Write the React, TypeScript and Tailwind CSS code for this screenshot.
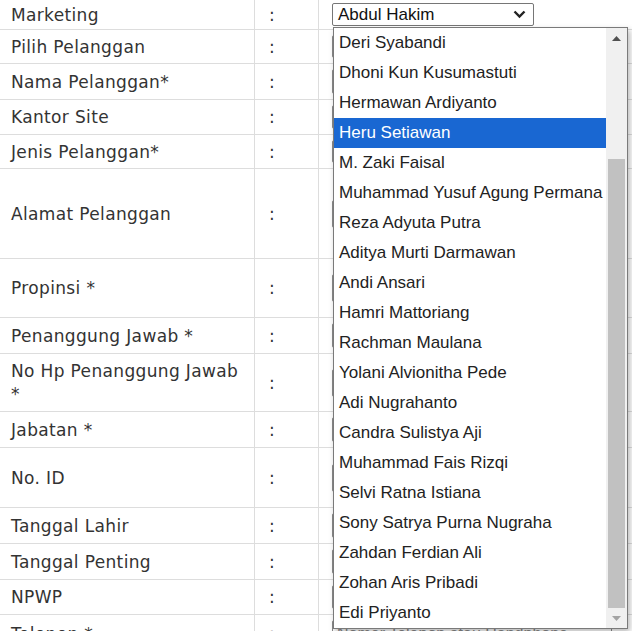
import React from "react";

const rows: { label: string; h: number }[] = [
  { label: "Marketing", h: 30 },
  { label: "Pilih Pelanggan", h: 34 },
  { label: "Nama Pelanggan*", h: 36 },
  { label: "Kantor Site", h: 35 },
  { label: "Jenis Pelanggan*", h: 34 },
  { label: "Alamat Pelanggan", h: 90 },
  { label: "Propinsi *", h: 59 },
  { label: "Penanggung Jawab *", h: 36 },
  { label: "No Hp Penanggung Jawab *", h: 58 },
  { label: "Jabatan *", h: 36 },
  { label: "No. ID", h: 60 },
  { label: "Tanggal Lahir", h: 36 },
  { label: "Tanggal Penting", h: 36 },
  { label: "NPWP", h: 35 },
  { label: "Telepon *", h: 38 },
];

const options = [
  "Deri Syabandi",
  "Dhoni Kun Kusumastuti",
  "Hermawan Ardiyanto",
  "Heru Setiawan",
  "M. Zaki Faisal",
  "Muhammad Yusuf Agung Permana",
  "Reza Adyuta Putra",
  "Aditya Murti Darmawan",
  "Andi Ansari",
  "Hamri Mattoriang",
  "Rachman Maulana",
  "Yolani Alvionitha Pede",
  "Adi Nugrahanto",
  "Candra Sulistya Aji",
  "Muhammad Fais Rizqi",
  "Selvi Ratna Istiana",
  "Sony Satrya Purna Nugraha",
  "Zahdan Ferdian Ali",
  "Zohan Aris Pribadi",
  "Edi Priyanto",
];

export default function App() {
  return (
    <div className="relative w-[632px] h-[631px] overflow-hidden bg-white">
      <div className="flex flex-col w-[760px]" style={{ fontFamily: '"DejaVu Sans", Verdana, sans-serif' }}>
        {rows.map((r, i) => (
          <div
            key={i}
            className="flex border-b border-[#dddddd] text-[#333333] text-[17px] leading-[23px] tracking-[0.35px]"
            style={{ height: r.h }}
          >
            <div className="w-[255px] shrink-0 border-r border-[#dddddd] pl-[11px] pr-[9px] pt-[1px] flex items-center">
              <span>{r.label}</span>
            </div>
            <div className="w-[64px] shrink-0 border-r border-[#dddddd] pl-[14px] pt-[1px] flex items-center">:</div>
            <div className="flex-1 pl-[13px] flex items-center tracking-normal">
              {i === 0 ? (
                <div
                  className="w-[202px] h-[23px] border border-[#767676] rounded-[2px] bg-white flex items-center justify-between pl-[5px] pr-[7px] text-[#111] text-[17px]"
                  style={{ fontFamily: '"Liberation Sans", Arial, sans-serif' }}
                >
                  <span>Abdul Hakim</span>
                  <svg width="13" height="9" viewBox="0 0 13 9">
                    <path d="M1.5 1.5 L6.5 6.5 L11.5 1.5" fill="none" stroke="#222" strokeWidth="2.4" />
                  </svg>
                </div>
              ) : (
                <div
                  className="w-[280px] h-[calc(100%-10px)] max-h-[28px] border border-[#8a8a8a] rounded-[2px] bg-white flex items-center pl-[4px] text-[#888] text-[16px]"
                  style={{ fontFamily: '"Liberation Sans", Arial, sans-serif' }}
                >
                  {i === 14 ? "Nomer Telepon atau Handphone" : ""}
                </div>
              )}
            </div>
          </div>
        ))}
      </div>

      {/* dropdown popup */}
      <div
        className="absolute left-[333px] top-[27px] w-[295px] h-[602px] bg-white border border-[#7a7a7a] shadow-[2px_3px_6px_rgba(0,0,0,0.28)] flex"
        style={{ fontFamily: '"Liberation Sans", Arial, sans-serif' }}
      >
        <div className="flex-1 flex flex-col">
          {options.map((o, i) => (
            <div
              key={o}
              className={
                "h-[30px] shrink-0 flex items-center pl-[5px] text-[17px] whitespace-nowrap " +
                (i === 3 ? "bg-[#1967d2] text-white" : "text-[#222222]")
              }
            >
              {o}
            </div>
          ))}
        </div>
        <div className="w-[21px] shrink-0 bg-[#f0f0f0] flex flex-col">
          <div className="h-[20px] flex items-center justify-center">
            <svg width="9" height="5" viewBox="0 0 9 5">
              <path d="M0 5 L4.5 0 L9 5 Z" fill="#505050" />
            </svg>
          </div>
          <div className="flex-1 flex flex-col px-[1px]">
            <div className="h-[111px]" />
            <div className="flex-1 bg-[#c1c1c1] mx-[1px]" />
          </div>
          <div className="h-[20px] flex items-center justify-center">
            <svg width="9" height="5" viewBox="0 0 9 5">
              <path d="M0 0 L9 0 L4.5 5 Z" fill="#a3a3a3" />
            </svg>
          </div>
        </div>
      </div>
    </div>
  );
}
